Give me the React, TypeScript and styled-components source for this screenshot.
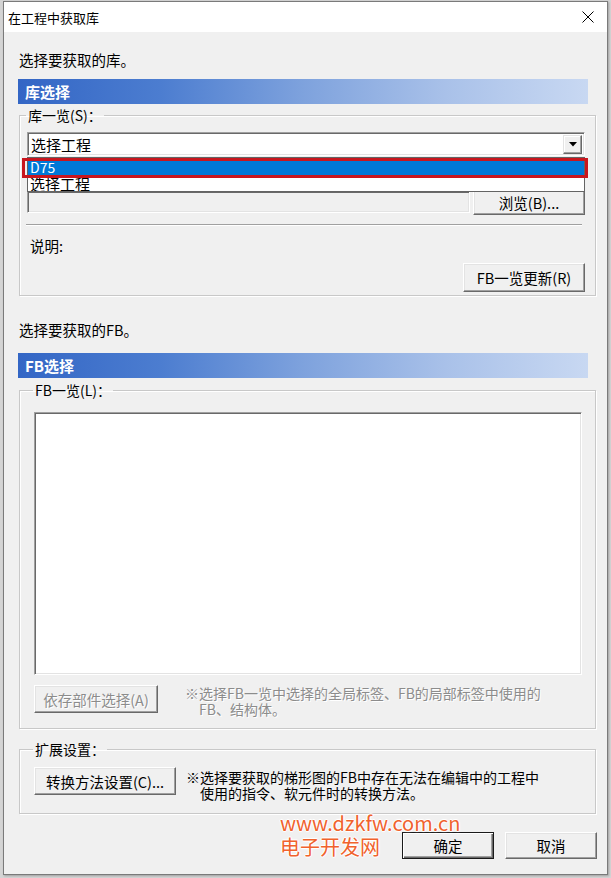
import React from "react";
import styled, { createGlobalStyle } from "styled-components";

const GlobalStyle = createGlobalStyle`
  html, body {
    margin: 0;
    padding: 0;
    background: #d4d4d4;
  }
  body {
    font-family: "Noto Sans CJK SC", "Microsoft YaHei", sans-serif;
    font-size: 14.5px;
    color: #000;
  }
`;

const Screen = styled.div`
  width: 611px;
  height: 878px;
  overflow: hidden;
  padding: 1px 0 0 3px;
  box-sizing: border-box;
`;

const Window = styled.div`
  position: relative;
  width: 605px;
  height: 874px;
  box-sizing: border-box;
  border: 1px solid #7a7a7a;
  background: #f0f0f0;
  display: flex;
  flex-direction: column;
  box-shadow: 1px 1px 2px rgba(0, 0, 0, 0.25);
`;

const TitleBar = styled.div`
  height: 30px;
  flex: none;
  background: #fff;
  display: flex;
  align-items: center;
  justify-content: space-between;
  padding: 0 13px 0 4px;
  font-size: 13px;
`;

const Body = styled.div`
  flex: 1;
  display: flex;
  flex-direction: column;
  padding: 0 11px 0 15px;
`;

const Intro = styled.div<{ $top: number }>`
  margin-top: ${(p) => p.$top}px;
  line-height: 20px;
  height: 20px;
`;

const HeaderBar = styled.div<{ $top: number }>`
  margin: ${(p) => p.$top}px 8px 0 -1px;
  height: 25px;
  line-height: 25px;
  padding-left: 7px;
  color: #fff;
  font-weight: bold;
  font-size: 15px;
  background: linear-gradient(
    to right,
    #3366c5 0%,
    #4c7dd0 25%,
    #7ea2dd 50%,
    #a9c1e9 75%,
    #c8d8f2 100%
  );
`;

const Group = styled.fieldset<{ $top: number; $pad: string }>`
  margin: ${(p) => p.$top}px 0 0 0;
  padding: ${(p) => p.$pad};
  border: 1px solid #c8c8c8;
  box-shadow: 1px 1px 0 #fff, inset 1px 1px 0 #fff;
  display: flex;
  flex-direction: column;
  min-width: 0;
`;

const Legend = styled.legend`
  padding: 0 2px;
  margin-left: -1px;
  line-height: 16px;
  font-size: 14px;
`;

const sunken = `
  box-sizing: border-box;
  border: 1px solid;
  border-color: #a0a0a0 #fff #fff #a0a0a0;
  box-shadow: inset 1px 1px 0 #696969, inset -1px -1px 0 #e3e3e3;
`;

const ComboWrap = styled.div`
  position: relative;
  height: 24px;
`;

const Combo = styled.div`
  ${sunken}
  height: 24px;
  background: #fff;
  display: flex;
  align-items: center;
  justify-content: space-between;
  padding: 0 2px 0 3px;
  font-size: 15px;
`;

const ArrowBtn = styled.div`
  width: 19px;
  height: 19px;
  box-sizing: border-box;
  background: #f0f0f0;
  border: 1px solid;
  border-color: #e3e3e3 #696969 #696969 #e3e3e3;
  box-shadow: inset -1px -1px 0 #a0a0a0, inset 1px 1px 0 #fff;
  display: flex;
  align-items: center;
  justify-content: center;
`;

const DropList = styled.div`
  position: absolute;
  top: 25px;
  left: 0;
  right: 0;
  background: #fff;
  border: 1px solid #646464;
  z-index: 2;
`;

const DropItem = styled.div<{ $selected?: boolean; $h: number }>`
  height: ${(p) => p.$h}px;
  line-height: ${(p) => p.$h}px;
  padding-left: 2px;
  font-size: ${(p) => (p.$selected ? 14 : 15)}px;
  background: ${(p) => (p.$selected ? "#0078d7" : "#fff")};
  color: ${(p) => (p.$selected ? "#fff" : "#000")};
  overflow: hidden;
`;

const Mark = styled.div`
  position: absolute;
  top: 26px;
  left: -5px;
  right: -3px;
  height: 20px;
  box-sizing: border-box;
  border: 3px solid #c8161e;
  z-index: 3;
`;

const FileRow = styled.div`
  margin-top: 33px;
  display: flex;
  align-items: center;
  gap: 3px;
`;

const TextField = styled.div`
  ${sunken}
  flex: 1;
  height: 22px;
  background: #f0f0f0;
`;

const Button = styled.button<{ $w: number; $h?: number; $default?: boolean }>`
  width: ${(p) => p.$w}px;
  height: ${(p) => p.$h ?? 28}px;
  flex: none;
  box-sizing: border-box;
  padding: 0;
  background: #f0f0f0;
  font-family: inherit;
  font-size: 14.5px;
  color: ${(p) => (p.disabled ? "#8c8c8c" : "#000")};
  text-shadow: ${(p) => (p.disabled ? "1px 1px 0 #fff" : "none")};
  border: 1px solid;
  border-color: ${(p) =>
    p.$default ? "#1a1a1a" : "#fff #696969 #696969 #fff"};
  box-shadow: ${(p) =>
    p.$default
      ? "inset 1px 1px 0 #fff, inset -1px -1px 0 #696969, inset -2px -2px 0 #a0a0a0"
      : "inset -1px -1px 0 #a0a0a0, inset 1px 1px 0 #e3e3e3"};
`;

const Separator = styled.div`
  margin: 9px 3px 0 -1px;
  height: 0;
  border-top: 1px solid #a0a0a0;
  border-bottom: 1px solid #fff;
`;

const Caption = styled.div`
  margin-top: 11px;
  padding-left: 3px;
  line-height: 18px;
`;

const RightButton = styled.div`
  margin-top: 8px;
  display: flex;
  justify-content: flex-end;
`;

const ListBox = styled.div`
  ${sunken}
  height: 263px;
  background: #fff;
`;

const ActionRow = styled.div<{ $top: number; $gap: number }>`
  margin-top: ${(p) => p.$top}px;
  display: flex;
  align-items: flex-start;
  gap: ${(p) => p.$gap}px;
`;

const Note = styled.div<{ $muted?: boolean; $top: number }>`
  margin-top: ${(p) => p.$top}px;
  font-size: 14px;
  line-height: 16px;
  color: ${(p) => (p.$muted ? "#8c8c8c" : "#000")};
  text-shadow: ${(p) => (p.$muted ? "1px 1px 0 #fff" : "none")};
`;

const NoteLine = styled.div<{ $indent?: boolean }>`
  padding-left: ${(p) => (p.$indent ? 14 : 0)}px;
  white-space: nowrap;
`;

const Footer = styled.div`
  margin: 18px -1px 0 0;
  display: flex;
  justify-content: flex-end;
  gap: 11px;
`;

const Watermark = styled.div`
  position: absolute;
  left: 276px;
  top: 809px;
  color: #f0622d;
  font-size: 20px;
  line-height: 24px;
  z-index: 4;
  text-shadow: 1px 0 0 #fff, -1px 0 0 #fff, 0 1px 0 #fff, 0 -1px 0 #fff,
    0 0 3px #fff;
  pointer-events: none;
`;

const CloseIcon = () => (
  <svg width="12" height="12" viewBox="0 0 12 12">
    <path d="M0.5 0.5 L11.5 11.5 M11.5 0.5 L0.5 11.5" stroke="#000" strokeWidth="1" />
  </svg>
);

const DownArrow = () => (
  <svg width="8" height="5" viewBox="0 0 8 5">
    <polygon points="0,0 8,0 4,4.5" fill="#000" />
  </svg>
);

export default function App() {
  return (
    <Screen>
      <GlobalStyle />
      <Window>
        <TitleBar>
          <span>在工程中获取库</span>
          <CloseIcon />
        </TitleBar>
        <Body>
          <Intro $top={18}>选择要获取的库。</Intro>
          <HeaderBar $top={9}>库选择</HeaderBar>

          <Group $top={3} $pad="9px 10px 3px 7px">
            <Legend>库一览(S)：</Legend>
            <ComboWrap>
              <Combo>
                <span>选择工程</span>
                <ArrowBtn>
                  <DownArrow />
                </ArrowBtn>
              </Combo>
              <DropList>
                <DropItem $selected $h={18}>D75</DropItem>
                <DropItem $h={15}>选择工程</DropItem>
              </DropList>
              <Mark />
            </ComboWrap>
            <FileRow>
              <TextField />
              <Button $w={112} $h={26}>浏览(B)...</Button>
            </FileRow>
            <Separator />
            <Caption>说明:</Caption>
            <RightButton>
              <Button $w={122} $h={29}>FB一览更新(R)</Button>
            </RightButton>
          </Group>

          <Intro $top={24}>选择要获取的FB。</Intro>
          <HeaderBar $top={13}>FB选择</HeaderBar>

          <Group $top={4} $pad="14px 13px 11px 14px">
            <Legend>FB一览(L)：</Legend>
            <ListBox />
            <ActionRow $top={10} $gap={27}>
              <Button $w={124} disabled>
                依存部件选择(A)
              </Button>
              <Note $muted $top={0}>
                <NoteLine>※选择FB一览中选择的全局标签、FB的局部标签中使用的</NoteLine>
                <NoteLine $indent>FB、结构体。</NoteLine>
              </Note>
            </ActionRow>
          </Group>

          <Group $top={12} $pad="10px 10px 12px 14px">
            <Legend>扩展设置：</Legend>
            <ActionRow $top={0} $gap={10}>
              <Button $w={142}>转换方法设置(C)...</Button>
              <Note $top={2}>
                <NoteLine>※选择要获取的梯形图的FB中存在无法在编辑中的工程中</NoteLine>
                <NoteLine $indent>使用的指令、软元件时的转换方法。</NoteLine>
              </Note>
            </ActionRow>
          </Group>

          <Footer>
            <Button $w={92} $h={27} $default>
              确定
            </Button>
            <Button $w={92} $h={27}>
              取消
            </Button>
          </Footer>
        </Body>
        <Watermark>
          <div>www.dzkfw.com.cn</div>
          <div>电子开发网</div>
        </Watermark>
      </Window>
    </Screen>
  );
}
